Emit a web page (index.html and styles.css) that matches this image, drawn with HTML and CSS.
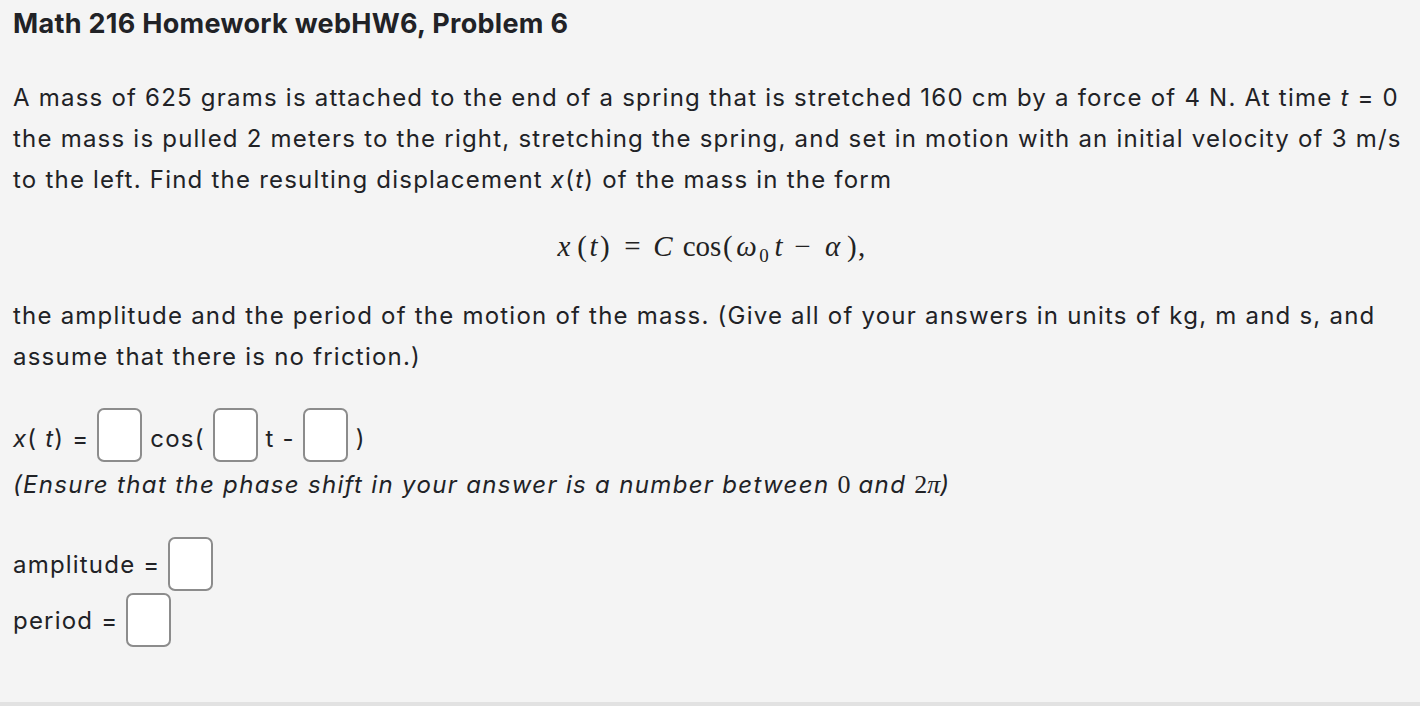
FILE: index.html
```html
<!DOCTYPE html>
<html>
<head>
<meta charset="utf-8">
<link rel="stylesheet" href="styles.css">
</head>
<body>
<div class="page">
  <h1 class="title">Math 216 Homework webHW6, Problem 6</h1>
  <p class="text intro">A mass of 625 grams is attached to the end of a spring that is stretched 160 cm by a force of 4 N. At time <i>t</i> = 0 the mass is pulled 2 meters to the right, stretching the spring, and set in motion with an initial velocity of 3 m/s to the left. Find the resulting displacement <i>x</i>(<i>t</i>) of the mass in the form</p>
  <div class="display"><span class="g mi w22 m2">x</span><span class="g w10">(</span><span class="g mi w13">t</span><span class="g w8 m14">)</span><span class="g w21 m10">=</span><span class="g mi w20 m9">C</span><span class="g w40 m1">cos</span><span class="g w9 m3">(</span><span class="g mi w23">ω</span><span class="g sub w12 m2">0</span><span class="g mi w13 m7">t</span><span class="g w21 m9">−</span><span class="g mi w21 m4">α</span><span class="g w8 m3">)</span><span class="g w5">,</span></div>
  <p class="text">the amplitude and the period of the motion of the mass. (Give all of your answers in units of kg, m and s, and assume that there is no friction.)</p>
  <div class="row xt-row"><span class="lbl"><i>x</i>( <i>t</i>) =</span><span class="box"></span><span class="lbl">cos(</span><span class="box"></span><span class="lbl">t -</span><span class="box"></span><span class="lbl">)</span></div>
  <p class="note">(Ensure that the phase shift in your answer is a number between <span class="mnum">0</span> and <span class="mnum">2<span class="pi">π</span></span>)</p>
  <div class="row amp-row"><span class="lbl">amplitude =</span><span class="box"></span></div>
  <div class="row per-row"><span class="lbl">period =</span><span class="box"></span></div>
</div>
</body>
</html>
```
FILE: styles.css
```css
html, body {
  margin: 0;
  padding: 0;
  background: #f4f4f4;
}
body {
  font-family: Inter, "Noto Sans", sans-serif;
  color: #212226;
}
.page {
  height: 702px;
  border-bottom: 4px solid #e2e2e2;
  padding: 0 13px;
  overflow: hidden;
}
.title {
  margin: 0;
  padding-top: 8px;
  font-size: 27px;
  line-height: 32px;
  font-weight: 700;
  letter-spacing: 0.3px;
}
.text {
  margin: 0;
  font-size: 24px;
  line-height: 41px;
  letter-spacing: 1.22px;
}
.intro {
  margin-top: 37px;
}
.display {
  font-family: "Liberation Serif", "DejaVu Serif", serif;
  font-size: 29px;
  line-height: 41px;
  height: 41px;
  margin: 26px 0 28px;
  text-align: center;
  padding-right: 4px;
  color: #222;
  white-space: nowrap;
}
.g {
  display: inline-block;
  text-align: center;
}
.mi {
  font-style: italic;
}
.sub {
  font-size: 19px;
  vertical-align: -6px;
}
.w5 { width: 5px; text-align: left; }
.w8 { width: 8px; }
.w9 { width: 9px; }
.w10 { width: 10px; }
.w12 { width: 12px; }
.w13 { width: 13px; }
.w20 { width: 20px; }
.w21 { width: 21px; }
.w22 { width: 22px; }
.w23 { width: 23px; }
.w40 { width: 40px; }
.m1 { margin-right: 1px; }
.m2 { margin-right: 2px; }
.m3 { margin-right: 3px; }
.m4 { margin-right: 4px; }
.m7 { margin-right: 7px; }
.m9 { margin-right: 9px; }
.m10 { margin-right: 10px; }
.m14 { margin-right: 14px; }
.row {
  display: flex;
  align-items: center;
  gap: 8px;
  font-size: 24px;
  letter-spacing: 1.2px;
}
.lbl {
  line-height: 29px;
}
.xt-row {
  margin-top: 31px;
}
.xt-row .lbl {
  padding-top: 6px;
}
.box {
  flex: none;
  box-sizing: border-box;
  width: 45px;
  height: 54px;
  border: 2px solid #8c8c8c;
  border-radius: 7px;
  background: #fff;
}
.note {
  margin: 2px 0 0;
  font-size: 24px;
  line-height: 41px;
  font-style: italic;
  letter-spacing: 1.33px;
}
.mnum {
  font-family: "Liberation Serif", "DejaVu Serif", serif;
  font-style: normal;
  font-size: 26px;
  letter-spacing: 0;
}
.pi {
  font-style: italic;
}
.amp-row {
  margin-top: 32px;
}
.per-row {
  margin-top: 2px;
}
.amp-row .lbl,
.per-row .lbl {
  padding-top: 1px;
}
```
